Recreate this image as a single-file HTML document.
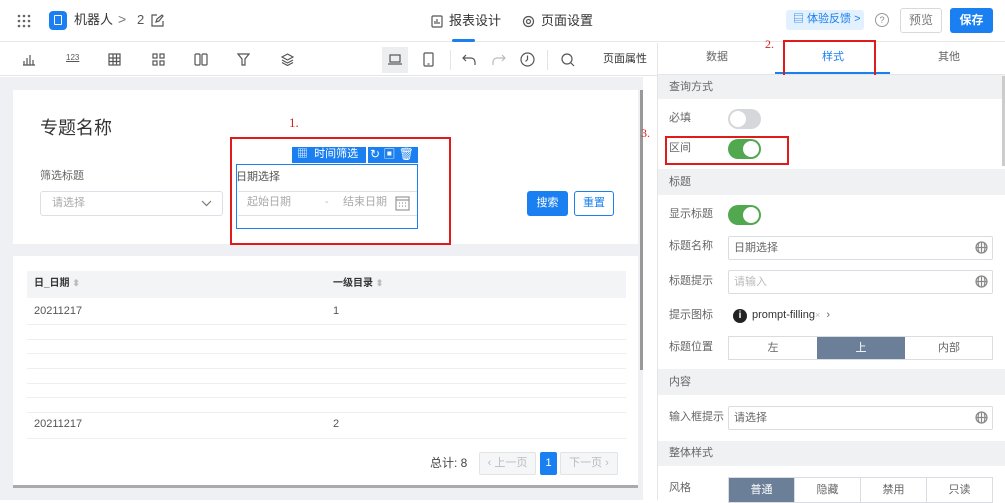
<!DOCTYPE html>
<html><head><meta charset="utf-8"><style>
*{box-sizing:border-box;margin:0;padding:0}
body{width:1005px;height:500px;overflow:hidden;position:relative;background:#fff;font-family:"Liberation Sans","Noto Sans CJK SC",sans-serif;color:#333;font-size:12px;line-height:1.2}
.a{position:absolute}
.t{position:absolute;white-space:nowrap;line-height:1.2}
.ic{position:absolute;stroke:#555;fill:none;stroke-width:1.2}
.hdr{position:absolute;left:658px;width:347px;background:#f0f1f3;color:#666;font-size:11px;padding-left:11px}
.lbl{position:absolute;left:669px;font-size:11px;color:#666;line-height:1.2}
.inp{position:absolute;left:728px;width:265px;height:24px;border:1px solid #d9dce1;border-radius:2px;font-size:11px;color:#666;padding:0 5px;line-height:22px}
.tg{position:absolute;left:728px;width:33px;height:20px;border-radius:10px}
.tg i{position:absolute;top:2px;width:16px;height:16px;border-radius:50%;background:#fff}
</style></head><body>
<div class="a" style="left:0;top:0;width:1005px;height:42px;border-bottom:1px solid #e8e8e8"></div>
<svg class="a" style="left:17px;top:14px" width="14" height="14"><g fill="#666"><circle cx="2" cy="2" r="1.3"/><circle cx="7" cy="2" r="1.3"/><circle cx="12" cy="2" r="1.3"/><circle cx="2" cy="7" r="1.3"/><circle cx="7" cy="7" r="1.3"/><circle cx="12" cy="7" r="1.3"/><circle cx="2" cy="12" r="1.3"/><circle cx="7" cy="12" r="1.3"/><circle cx="12" cy="12" r="1.3"/></g></svg>
<div class="a" style="left:49px;top:11px;width:18px;height:19px;background:#1a7ff0;border-radius:4px"><div class="a" style="left:5px;top:4px;width:8px;height:10px;border:1.5px solid #fff;border-radius:1px"></div></div>
<div class="t" style="left:74px;top:12px;font-size:13px;color:#333">机器人</div>
<div class="t" style="left:118px;top:11px;font-size:14px;color:#777">&gt;</div>
<div class="t" style="left:137px;top:12px;font-size:13px;color:#555">2</div>
<svg class="ic" style="left:151px;top:14px" width="13" height="13"><path d="M6 1H1v11h11V7M5 8l1-3 5-4 1 1-4 5z"/></svg>
<svg class="ic" style="left:431px;top:15px" width="12" height="13"><rect x="1" y="1" width="10" height="11" rx="1"/><path d="M4 9V6M6 9V4M8 9V7"/></svg>
<div class="t" style="left:449px;top:13px;font-size:13px;color:#333">报表设计</div>
<div class="a" style="left:452px;top:39px;width:23px;height:3px;background:#1a7ff0;border-radius:2px"></div>
<svg class="ic" style="left:522px;top:15px" width="13" height="13"><circle cx="6.5" cy="6.5" r="5"/><circle cx="6.5" cy="6.5" r="2"/></svg>
<div class="t" style="left:541px;top:13px;font-size:13px;color:#333">页面设置</div>
<div class="a" style="left:786px;top:10px;width:78px;height:20px;background:#e3f0fd;border-radius:3px"></div>
<div class="t" style="left:793px;top:13px;font-size:11px;color:#1a7ff0">▤ 体验反馈 &gt;</div>
<div class="a" style="left:875px;top:13px;width:14px;height:14px;border:1px solid #999;border-radius:50%;font-size:9px;color:#888;text-align:center;line-height:12px">?</div>
<div class="a" style="left:900px;top:8px;width:42px;height:25px;border:1px solid #d9d9d9;border-radius:3px;font-size:12px;color:#777;text-align:center;line-height:23px">预览</div>
<div class="a" style="left:950px;top:8px;width:43px;height:25px;background:#1a7ff0;border-radius:3px;font-size:12px;color:#fff;text-align:center;line-height:25px;font-weight:bold">保存</div>
<div class="a" style="left:0;top:43px;width:658px;height:33px;border-bottom:1px solid #e5e5e5"></div>
<svg class="ic" style="left:22px;top:53px" width="14" height="13"><path d="M2 12V8M5 12V5M8 12V2M11 12V7M1 12h12"/></svg>
<div class="t" style="left:66px;top:53px;font-size:8px;color:#555;text-decoration:underline">123</div>
<svg class="ic" style="left:108px;top:53px" width="13" height="13"><rect x="1" y="1" width="11" height="11"/><path d="M1 5h11M1 8.5h11M5 1v11M8.5 1v11"/></svg>
<svg class="ic" style="left:152px;top:53px" width="13" height="13"><rect x="1" y="1" width="4" height="4"/><rect x="8" y="1" width="4" height="4"/><rect x="1" y="8" width="4" height="4"/><rect x="8" y="8" width="4" height="4"/></svg>
<svg class="ic" style="left:194px;top:53px" width="14" height="13"><rect x="1" y="1" width="5" height="11" rx="1"/><rect x="8" y="1" width="5" height="11" rx="1"/></svg>
<svg class="ic" style="left:237px;top:53px" width="13" height="13"><path d="M1 1h11L8 6v6H5V6z"/></svg>
<svg class="ic" style="left:281px;top:53px" width="13" height="13"><path d="M6.5 1L12 4 6.5 7 1 4zM1 7l5.5 3L12 7M1 9.5l5.5 3 5.5-3"/></svg>
<div class="a" style="left:382px;top:47px;width:26px;height:26px;background:#eceef0"></div>
<svg class="ic" style="left:388px;top:53px" width="14" height="13"><rect x="2" y="2" width="10" height="7"/><path d="M0 11h14"/></svg>
<svg class="ic" style="left:423px;top:52px" width="11" height="15"><rect x="1" y="1" width="9" height="13" rx="1"/><path d="M4.5 12h2"/></svg>
<div class="a" style="left:450px;top:50px;width:1px;height:20px;background:#e5e5e5"></div>
<svg class="ic" style="left:462px;top:54px" width="15" height="12"><path d="M4 1L1 4l3 3M1 4h8a4 4 0 014 4v3"/></svg>
<svg class="ic" style="left:491px;top:54px;stroke:#bbb" width="15" height="12"><path d="M11 1l3 3-3 3M14 4H6a4 4 0 00-4 4v3"/></svg>
<svg class="ic" style="left:520px;top:52px" width="15" height="15"><circle cx="7.5" cy="7.5" r="6.5"/><path d="M7.5 3.5v4l-2 2"/></svg>
<div class="a" style="left:547px;top:50px;width:1px;height:20px;background:#e5e5e5"></div>
<svg class="ic" style="left:561px;top:53px" width="14" height="14"><circle cx="6" cy="6" r="5"/><path d="M10 10l3 3"/></svg>
<div class="t" style="left:603px;top:53px;font-size:11px;color:#333">页面属性</div>
<div class="a" style="left:0;top:77px;width:658px;height:423px;background:#eef0f3"></div>
<div class="a" style="left:13px;top:90px;width:625px;height:154px;background:#fff"></div>
<div class="a" style="left:13px;top:256px;width:625px;height:229px;background:#fff"></div>
<div class="a" style="left:13px;top:485px;width:625px;height:3px;background:#aaa"></div>
<div class="a" style="left:640px;top:90px;width:3px;height:280px;background:#999"></div>
<div class="a" style="left:643px;top:76px;width:15px;height:424px;background:#fff"></div>
<div class="t" style="left:40px;top:118px;font-size:18px;color:#333">专题名称</div>
<div class="t" style="left:40px;top:170px;font-size:11px;color:#666">筛选标题</div>
<div class="a" style="left:40px;top:191px;width:183px;height:25px;border:1px solid #dcdfe6;border-radius:3px"></div>
<div class="t" style="left:52px;top:197px;font-size:11px;color:#aaa">请选择</div>
<svg class="ic" style="left:201px;top:200px;stroke:#777" width="11" height="7"><path d="M1 1l4.5 4.5L10 1"/></svg>
<div class="a" style="left:230px;top:137px;width:221px;height:108px;border:2px solid #e01b1b"></div>
<div class="t" style="left:289px;top:115px;font-size:13px;color:#d42020;font-family:'Liberation Serif',serif">1.</div>
<div class="a" style="left:292px;top:147px;width:74px;height:16px;background:#1a7ff0"></div>
<div class="t" style="left:297px;top:148px;font-size:11px;color:#fff">▦ &nbsp;时间筛选</div>
<div class="a" style="left:368px;top:147px;width:50px;height:16px;background:#1a7ff0"></div>
<div class="t" style="left:370px;top:147px;font-size:12px;color:#fff">↻ ▣ 🗑</div>
<div class="a" style="left:236px;top:164px;width:182px;height:65px;border:1.5px solid #1a7ff0"></div>
<div class="t" style="left:236px;top:171px;font-size:11px;color:#555">日期选择</div>
<div class="a" style="left:238px;top:191px;width:179px;height:25px;border-top:1px solid #e0e0e0;border-bottom:1px solid #e0e0e0"></div>
<div class="t" style="left:247px;top:196px;font-size:11px;color:#aaa">起始日期</div>
<div class="t" style="left:325px;top:196px;font-size:11px;color:#bbb">-</div>
<div class="t" style="left:343px;top:196px;font-size:11px;color:#aaa">结束日期</div>
<svg class="ic" style="left:395px;top:195px;stroke:#999" width="15" height="16"><rect x="1" y="2" width="13" height="13"/><path d="M1 5h13M4 8h1M7 8h1M10 8h1M4 11h1M7 11h1M10 11h1"/></svg>
<div class="a" style="left:527px;top:191px;width:41px;height:25px;background:#1a7ff0;border-radius:3px;color:#fff;font-size:11px;text-align:center;line-height:25px">搜索</div>
<div class="a" style="left:574px;top:191px;width:40px;height:25px;border:1px solid #1a7ff0;border-radius:3px;color:#1a7ff0;font-size:11px;text-align:center;line-height:23px">重置</div>
<div class="a" style="left:27px;top:271px;width:599px;height:27px;background:#f3f4f6"></div>
<div class="t" style="left:34px;top:278px;font-size:10px;font-weight:bold;color:#333">日_日期 <span style="color:#bbb;font-size:9px">⬍</span></div>
<div class="t" style="left:333px;top:278px;font-size:10px;font-weight:bold;color:#333">一级目录 <span style="color:#bbb;font-size:9px">⬍</span></div>
<div class="t" style="left:34px;top:305px;font-size:11px;color:#555">20211217</div>
<div class="t" style="left:333px;top:305px;font-size:11px;color:#555">1</div>
<div class="t" style="left:34px;top:418px;font-size:11px;color:#555">20211217</div>
<div class="t" style="left:333px;top:418px;font-size:11px;color:#555">2</div>
<div class="a" style="left:27px;top:324px;width:599px;height:1px;background:#eee"></div>
<div class="a" style="left:27px;top:339px;width:599px;height:1px;background:#eee"></div>
<div class="a" style="left:27px;top:353px;width:599px;height:1px;background:#eee"></div>
<div class="a" style="left:27px;top:368px;width:599px;height:1px;background:#eee"></div>
<div class="a" style="left:27px;top:383px;width:599px;height:1px;background:#eee"></div>
<div class="a" style="left:27px;top:397px;width:599px;height:1px;background:#eee"></div>
<div class="a" style="left:27px;top:412px;width:599px;height:1px;background:#eee"></div>
<div class="a" style="left:27px;top:438px;width:599px;height:1px;background:#eee"></div>
<div class="t" style="left:430px;top:456px;font-size:12px;color:#444">总计: 8</div>
<div class="a" style="left:479px;top:452px;width:57px;height:23px;border:1px solid #e3e3e3;background:#f5f6f7;border-radius:2px;color:#bbb;font-size:11px;text-align:center;line-height:21px">‹ 上一页</div>
<div class="a" style="left:540px;top:452px;width:17px;height:23px;background:#1a7ff0;border-radius:2px;color:#fff;font-size:11px;text-align:center;line-height:23px">1</div>
<div class="a" style="left:560px;top:452px;width:58px;height:23px;border:1px solid #e3e3e3;background:#f5f6f7;border-radius:2px;color:#bbb;font-size:11px;text-align:center;line-height:21px">下一页 ›</div>
<div class="a" style="left:657px;top:43px;width:1px;height:457px;background:#e5e5e5"></div>
<div class="a" style="left:658px;top:74px;width:347px;height:1px;background:#e5e5e5"></div>
<div class="t" style="left:706px;top:51px;font-size:11px;color:#666">数据</div>
<div class="t" style="left:822px;top:51px;font-size:11px;color:#1a7ff0">样式</div>
<div class="t" style="left:938px;top:51px;font-size:11px;color:#666">其他</div>
<div class="a" style="left:775px;top:72px;width:115px;height:2px;background:#1a7ff0"></div>
<div class="a" style="left:783px;top:40px;width:93px;height:37px;border:2px solid #e01b1b"></div>
<div class="t" style="left:765px;top:37px;font-size:12px;color:#d42020;font-family:'Liberation Serif',serif">2.</div>
<div class="hdr" style="top:75px;height:24px;line-height:24px">查询方式</div>
<div class="lbl" style="top:112px">必填</div>
<div class="tg" style="top:109px;background:#d5d7da"><i style="left:2px"></i></div>
<div class="lbl" style="top:142px">区间</div>
<div class="tg" style="top:139px;background:#52a84f"><i style="right:2px"></i></div>
<div class="a" style="left:665px;top:136px;width:124px;height:29px;border:2px solid #e01b1b"></div>
<div class="t" style="left:641px;top:126px;font-size:12px;color:#d42020;font-family:'Liberation Serif',serif">3.</div>
<div class="hdr" style="top:169px;height:26px;line-height:26px">标题</div>
<div class="lbl" style="top:208px">显示标题</div>
<div class="tg" style="top:205px;background:#52a84f"><i style="right:2px"></i></div>
<div class="lbl" style="top:240px">标题名称</div>
<div class="inp" style="top:236px">日期选择</div>
<div class="lbl" style="top:275px">标题提示</div>
<div class="inp" style="top:270px;color:#bbb">请输入</div>
<svg class="ic" style="left:975px;top:241px;stroke:#888" width="13" height="13"><circle cx="6.5" cy="6.5" r="5.5"/><path d="M1 6.5h11M6.5 1v11M4 2q-2 4.5 0 9M9 2q2 4.5 0 9"/></svg>
<svg class="ic" style="left:975px;top:275px;stroke:#888" width="13" height="13"><circle cx="6.5" cy="6.5" r="5.5"/><path d="M1 6.5h11M6.5 1v11M4 2q-2 4.5 0 9M9 2q2 4.5 0 9"/></svg>
<div class="lbl" style="top:309px">提示图标</div>
<div class="a" style="left:733px;top:309px;width:14px;height:14px;border-radius:50%;background:#222;color:#fff;font-size:10px;font-weight:bold;text-align:center;line-height:14px">i</div>
<div class="t" style="left:752px;top:309px;font-size:11px;color:#333">prompt-filling<span style="color:#bbb;font-size:9px">×</span> &nbsp;<span style="color:#666">›</span></div>
<div class="lbl" style="top:341px">标题位置</div>
<div class="a" style="left:728px;top:336px;width:265px;height:24px;border:1px solid #d9dce1;font-size:11px;color:#666">
<div class="a" style="left:0;top:0;width:88px;height:22px;text-align:center;line-height:22px">左</div>
<div class="a" style="left:88px;top:0;width:88px;height:22px;background:#6b7f99;color:#fff;text-align:center;line-height:22px">上</div>
<div class="a" style="left:176px;top:0;width:88px;height:22px;text-align:center;line-height:22px">内部</div></div>
<div class="hdr" style="top:369px;height:26px;line-height:26px">内容</div>
<div class="lbl" style="top:411px">输入框提示</div>
<div class="inp" style="top:406px">请选择</div>
<svg class="ic" style="left:975px;top:411px;stroke:#888" width="13" height="13"><circle cx="6.5" cy="6.5" r="5.5"/><path d="M1 6.5h11M6.5 1v11M4 2q-2 4.5 0 9M9 2q2 4.5 0 9"/></svg>
<div class="hdr" style="top:441px;height:25px;line-height:25px">整体样式</div>
<div class="lbl" style="top:482px">风格</div>
<div class="a" style="left:728px;top:477px;width:265px;height:26px;border:1px solid #d9dce1;font-size:11px;color:#666">
<div class="a" style="left:0;top:0;width:65px;height:24px;background:#6b7f99;color:#fff;text-align:center;line-height:24px">普通</div>
<div class="a" style="left:65px;top:0;width:66px;height:24px;border-left:1px solid #d9dce1;text-align:center;line-height:24px">隐藏</div>
<div class="a" style="left:131px;top:0;width:66px;height:24px;border-left:1px solid #d9dce1;text-align:center;line-height:24px">禁用</div>
<div class="a" style="left:197px;top:0;width:66px;height:24px;border-left:1px solid #d9dce1;text-align:center;line-height:24px">只读</div></div>
<div class="a" style="left:1002px;top:76px;width:3px;height:90px;background:#ccc"></div>
</body></html>
